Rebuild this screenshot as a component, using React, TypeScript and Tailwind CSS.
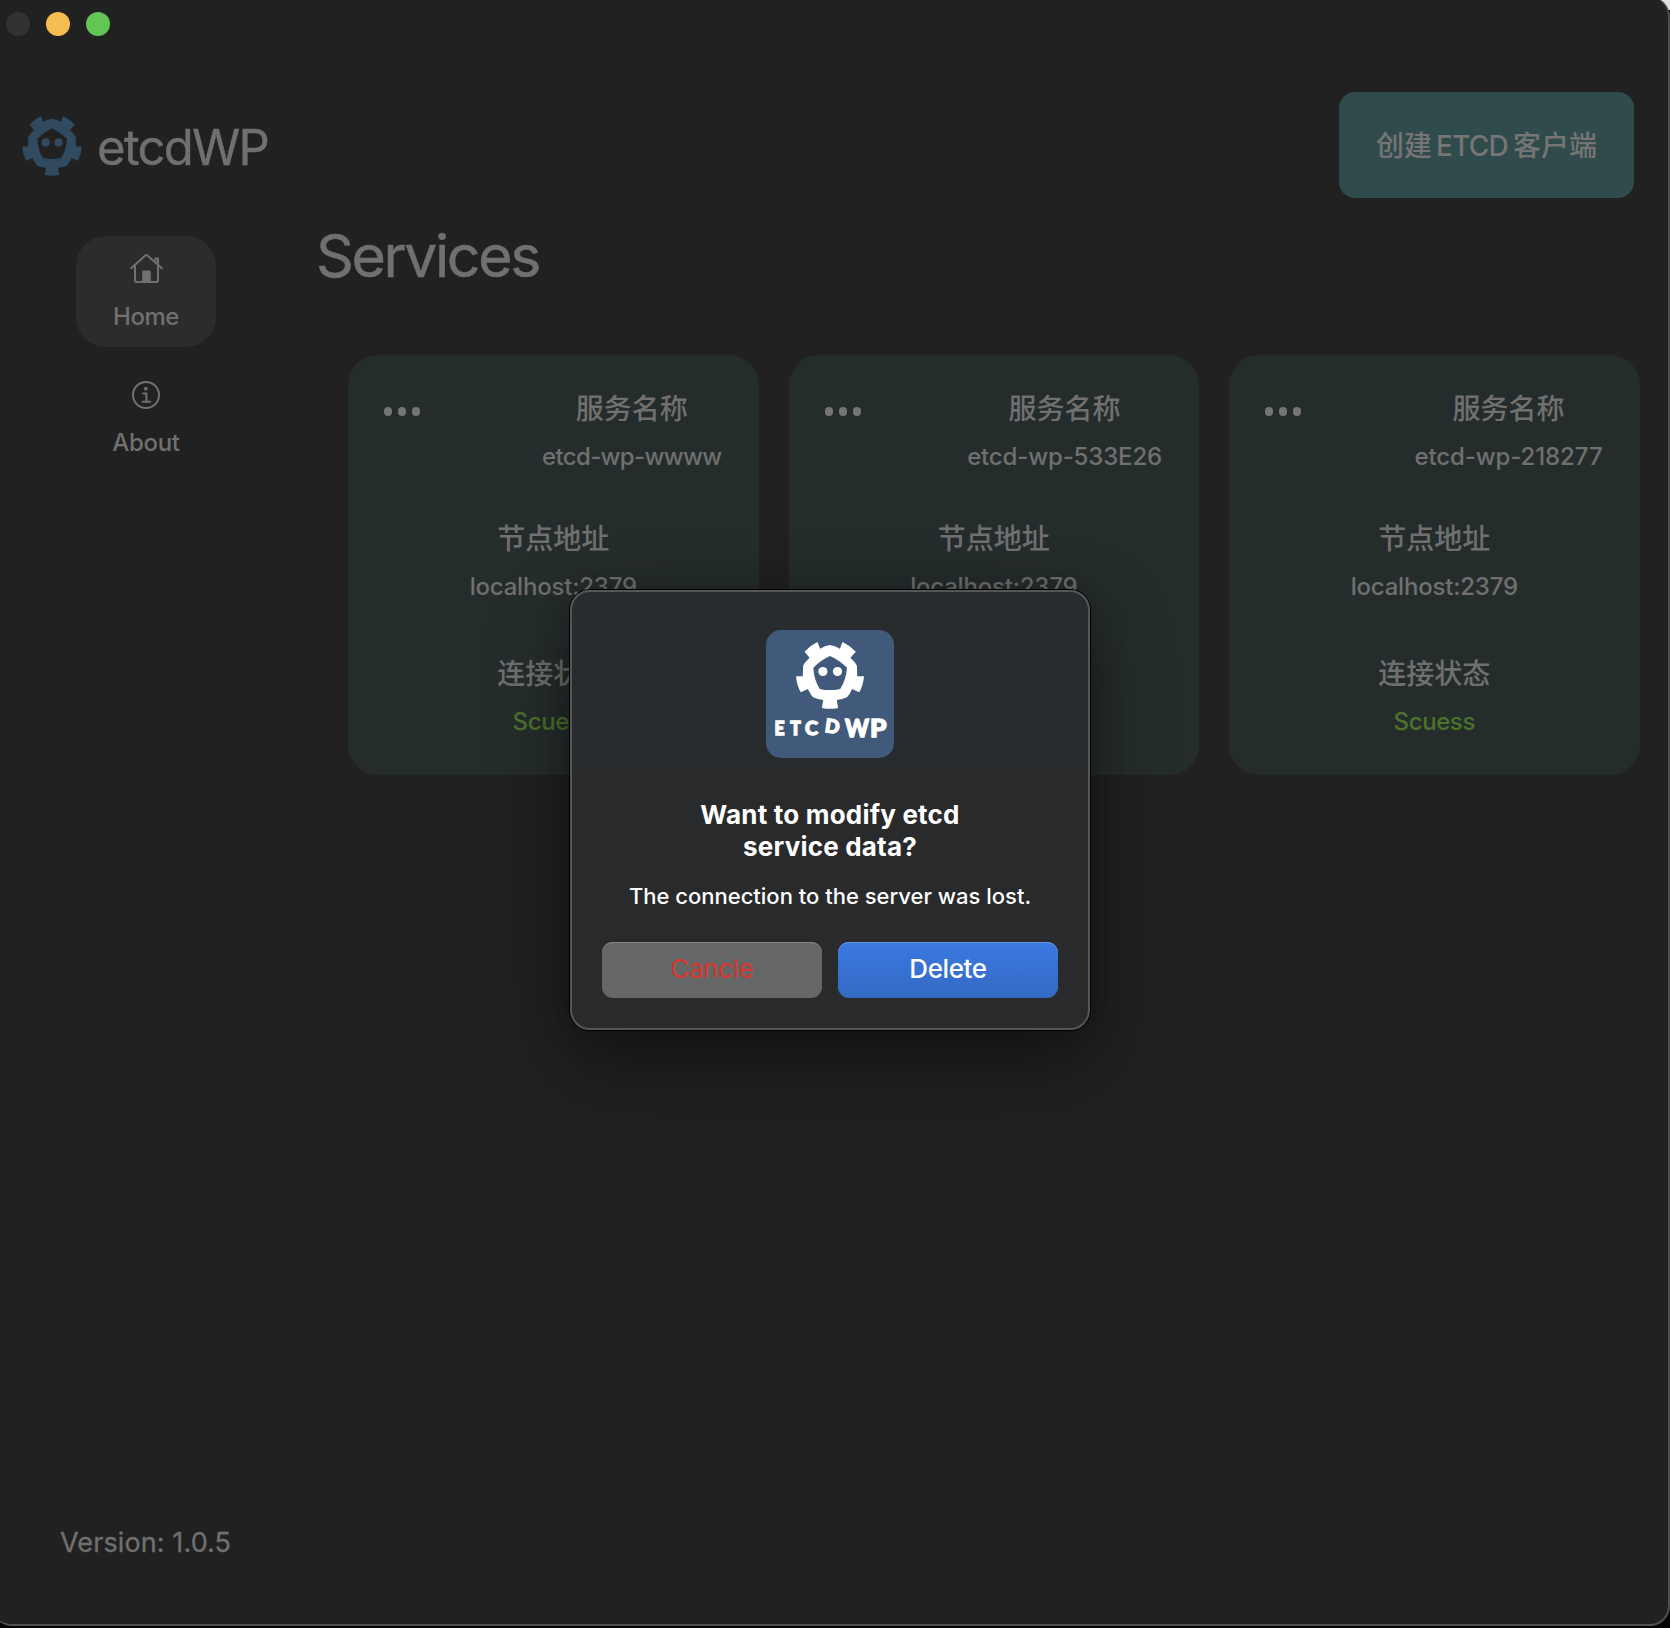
import React from "react";

const services = [
  { name: "etcd-wp-wwww", tracking: "tracking-[-0.65px]" },
  { name: "etcd-wp-533E26", tracking: "tracking-[-0.15px]" },
  { name: "etcd-wp-218277", tracking: "tracking-[-0.1px]" },
];

const cjk = "font-['Noto_Sans_CJK_SC',sans-serif] font-medium";

function GearMascot({ className }: { className: string }) {
  return (
    <svg viewBox="0 0 200 200" preserveAspectRatio="none" fill="currentColor" className={className}>
      <path
        fillRule="evenodd"
        d="M25 29Q42 10 63 0L71 20Q85 11 100 9Q115 11 129 20L137 0Q158 10 176 29L160 47Q174 60 179 70L180 102H200Q198 128 186 150L165 140Q158 156 150 165Q135 171 120 173L124 197Q100 202 76 197L80 173Q65 171 50 165Q42 156 35 140L14 150Q2 128 0 102H20L21 70Q26 60 40 47ZM100 42Q73 54 51 77Q53 115 70 140Q100 147 130 140Q147 115 150 77Q127 54 100 42Z"
      />
      <circle cx="79" cy="88" r="13.5" />
      <circle cx="122" cy="88" r="13.5" />
    </svg>
  );
}

function HomeIcon() {
  return (
    <svg width="33" height="30" viewBox="0 0 33 30" fill="none" stroke="currentColor" strokeWidth="2" strokeLinecap="round" strokeLinejoin="round">
      <path d="M1.2 14.2L15.3 1.6a1.6 1.6 0 0 1 2.1 0L31.8 14.2" />
      <path d="M5 11.5v14.6a2 2 0 0 0 2 2h19a2 2 0 0 0 2-2V4.4h-2.6V8" />
      <path d="M13.2 17.6h6.6V28h-6.6z" fill="currentColor" />
    </svg>
  );
}

function InfoIcon() {
  return (
    <svg width="28" height="28" viewBox="0 0 28 28" fill="none" stroke="currentColor" strokeWidth="2">
      <circle cx="14" cy="14" r="13" />
      <circle cx="13.8" cy="7.7" r="1.9" fill="currentColor" stroke="none" />
      <path d="M11.2 12.4h3.2v8.3M10.6 20.7h7.6" strokeLinecap="round" />
    </svg>
  );
}

function ServiceCard({ name, tracking }: { name: string; tracking: string }) {
  return (
    <article className="flex h-[420px] w-[410.5px] flex-col items-center rounded-[30px] bg-[#252d2c] pt-[33px] font-medium">
      <div className="flex w-full justify-between pl-9 pr-[37px]">
        <div className="mt-[19px] flex h-[9px] gap-[6px]">
          <span className="h-[9px] w-2 rounded-full bg-[#757575]" />
          <span className="h-[9px] w-2 rounded-full bg-[#757575]" />
          <span className="h-[9px] w-2 rounded-full bg-[#757575]" />
        </div>
        <div className="flex flex-col items-center">
          <h2 className={`text-[28px] leading-[38px] ${cjk}`}>服务名称</h2>
          <p className={`mt-[13px] text-[24px] leading-[36px] ${tracking}`}>{name}</p>
        </div>
      </div>
      <h2 className={`mt-[43px] text-[28px] leading-[38px] ${cjk}`}>节点地址</h2>
      <p className="mt-[13px] text-[24px] leading-[36px] tracking-[-0.2px]">localhost:2379</p>
      <h2 className={`mt-[48px] text-[28px] leading-[38px] ${cjk}`}>连接状态</h2>
      <p className="mt-[13px] text-[24px] leading-[36px] tracking-[-0.4px] text-[#4a7329]">Scuess</p>
    </article>
  );
}

function ConfirmDialog() {
  return (
    <div
      role="alertdialog"
      className="absolute left-[570px] top-[590px] flex h-[440px] w-[520px] flex-col items-center rounded-[20px] border-2 border-[#555657] bg-linear-to-b from-[#292c2e] via-[#282b2d] via-35% to-[#292a2c] to-48% pt-[38px] text-white shadow-[0_0_0_1px_#000,0_32px_80px_rgba(0,0,0,0.42),0_0_36px_rgba(0,0,0,0.2)]"
    >
      <div className="flex h-32 w-32 flex-col items-center rounded-[15px] bg-[#415a7b] pt-[12px]">
        <GearMascot className="h-[67px] w-[68px]" />
        <svg width="128" height="40" viewBox="0 0 128 40" fill="#fff" stroke="#fff" strokeWidth="1.3" className="overflow-visible font-['Lato',sans-serif] font-black">
          <text x="8.5" y="26" fontSize="18.5" textLength="10" lengthAdjust="spacingAndGlyphs">E</text>
          <text x="24.3" y="26" fontSize="18.5" textLength="10.5" lengthAdjust="spacingAndGlyphs">T</text>
          <text x="39" y="26" fontSize="18.5" textLength="13" lengthAdjust="spacingAndGlyphs">C</text>
          <text x="59" y="24" fontSize="19" textLength="14.5" lengthAdjust="spacingAndGlyphs" transform="rotate(8 65 18)">D</text>
          <text x="79" y="28" fontSize="24" textLength="24" lengthAdjust="spacingAndGlyphs">W</text>
          <text x="104" y="28" fontSize="24" textLength="16.5" lengthAdjust="spacingAndGlyphs">P</text>
        </svg>
      </div>
      <h1 className="mt-[41px] text-center text-[26px] font-bold leading-8 tracking-[0.2px]">
        Want to modify etcd
        <br />
        service data?
      </h1>
      <p className="mt-[17px] whitespace-nowrap text-[22px] font-medium leading-8">The connection to the server was lost.</p>
      <div className="mt-[30px] flex gap-4">
        <button className="h-14 w-[220px] rounded-[11px] bg-[#656668] pb-[3px] text-[26px] leading-[51px] tracking-[-0.4px] text-[#d9382b] shadow-[inset_0_1px_0_#858688]">Cancle</button>
        <button className="h-14 w-[220px] rounded-[11px] bg-linear-to-b from-[#3b79e1] to-[#3369c3] pb-[3px] text-[26px] font-medium leading-[51px] tracking-[-0.4px] shadow-[inset_0_1px_0_#6596e6]">Delete</button>
      </div>
    </div>
  );
}

export default function App() {
  return (
    <div className="relative h-[1628px] w-[1670px] overflow-hidden bg-[linear-gradient(#dedede_10px,#050305_10px)] font-['Inter',sans-serif] text-[#707070]">
      <div className="-ml-[8px] -mt-[3px] flex h-[1629px] w-[1678px] flex-col rounded-b-[20px] rounded-tr-[20px] border-b-2 border-r-2 border-[#505050] bg-[#212121] pl-[8px]">
        <div className="flex gap-4 pl-[6px] pt-[15px]">
          <span className="h-6 w-6 rounded-full bg-[#313131]" />
          <span className="h-6 w-6 rounded-full bg-[#f6be50]" />
          <span className="h-6 w-6 rounded-full bg-[#62c655]" />
        </div>
        <header className="mt-14 flex h-[106px] items-start justify-between pl-[22px] pr-[34px]">
          <div className="flex items-start gap-[15px] pt-6">
            <GearMascot className="h-[60px] w-[60px] text-[#304a60]" />
            <span className="mt-[2px] text-[49px] leading-[60px] tracking-[-1.8px] [-webkit-text-stroke:0.4px_#707070]">etcdWP</span>
          </div>
          <button className={`h-[106px] w-[295px] rounded-[16px] bg-[#304b4b] text-[28px] leading-[105px] text-[#757575] ${cjk}`}>
            创建<span className="ml-[4px] mr-[5px] font-['Inter'] tracking-[-0.8px]">ETCD</span>客户端
          </button>
        </header>
        <div className="flex">
          <nav className="flex w-[292px] flex-col items-center pt-[38px] font-medium">
            <a className="flex h-[111px] w-[140px] flex-col items-center rounded-[30px] bg-[#2c2c2c] pt-[18px]">
              <HomeIcon />
              <span className="mt-[15px] text-[24px] leading-[36px] tracking-[-0.5px]">Home</span>
            </a>
            <a className="mt-[34px] flex flex-col items-center">
              <InfoIcon />
              <span className="mt-[16px] text-[24px] leading-[36px] tracking-[-0.3px]">About</span>
            </a>
          </nav>
          <main className="pt-7">
            <h1 className="pl-[24px] text-[59px] leading-[60px] tracking-[-2.4px] [-webkit-text-stroke:0.5px_#707070]">Services</h1>
            <section className="ml-14 mt-[69px] flex gap-[30px]">
              {services.map((s) => (
                <ServiceCard key={s.name} name={s.name} tracking={s.tracking} />
              ))}
            </section>
          </main>
        </div>
        <footer className="mb-[61px] mt-auto pl-[60px] text-[27px] leading-10 tracking-[0.1px] [-webkit-text-stroke:0.3px_#707070]">Version: 1.0.5</footer>
      </div>
      <ConfirmDialog />
    </div>
  );
}
